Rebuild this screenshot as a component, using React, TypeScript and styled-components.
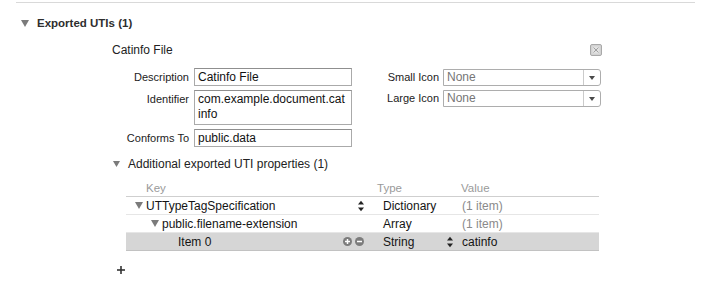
import React from "react";
import styled, { createGlobalStyle } from "styled-components";

const Global = createGlobalStyle`
  html, body { margin: 0; padding: 0; background: #ffffff; }
  body {
    font-family: "Liberation Sans", Arial, Helvetica, sans-serif;
    color: #1c1c1c;
  }
`;

const Page = styled.div`
  width: 708px;
  height: 285px;
  padding-top: 2px;
  box-sizing: border-box;
  overflow: hidden;
`;

const Section = styled.section`
  margin-left: 16px;
  width: 679px;
  border-top: 1px solid #d9d9d9;
`;

const SectionHeader = styled.div`
  display: flex;
  align-items: center;
  gap: 8px;
  height: 16px;
  margin-top: 12px;
  padding-left: 5px;
  font-size: 11.5px;
  font-weight: bold;
  color: #2e2e2e;
`;

const Body = styled.div`
  margin-left: 96px;
  margin-top: 12px;
  display: flex;
  flex-direction: column;
`;

const TitleRow = styled.div`
  display: flex;
  align-items: center;
  justify-content: space-between;
  width: 490px;
  height: 14px;
  font-size: 12px;
  color: #222;
`;

const FormRow = styled.div`
  display: flex;
  align-items: flex-start;
  margin-top: 11px;
`;

const LeftGrid = styled.div`
  display: grid;
  grid-template-columns: 77px 158px;
  column-gap: 5px;
  row-gap: 4px;
`;

const RightGrid = styled.div`
  display: grid;
  grid-template-columns: 54px 158px;
  column-gap: 4px;
  row-gap: 4px;
  margin-left: 33px;
  margin-top: 1px;
`;

const Label = styled.div<{ $h?: number }>`
  font-size: 11px;
  text-align: right;
  line-height: ${(p) => p.$h ?? 18}px;
  color: #222;
  white-space: nowrap;
`;

const TextField = styled.div<{ $tall?: boolean }>`
  box-sizing: border-box;
  height: ${(p) => (p.$tall ? 35 : 18)}px;
  border: 1px solid #aaaaaa;
  border-top-color: #8f8f8f;
  background: #fff;
  padding: ${(p) => (p.$tall ? "1px 3px 0" : "0 3px")};
  font-size: 12px;
  line-height: ${(p) => (p.$tall ? 15 : 16)}px;
  color: #111;
  white-space: nowrap;
  overflow: hidden;
`;

const Popup = styled.div`
  box-sizing: border-box;
  display: flex;
  height: 17px;
  border: 1px solid #adadad;
  border-radius: 0 3px 3px 0;
  background: #fff;
`;

const PopupValue = styled.div`
  flex: 1;
  padding-left: 3px;
  font-size: 12px;
  line-height: 15px;
  color: #767676;
`;

const PopupArrow = styled.div`
  width: 16px;
  border-left: 1px solid #cbcbcb;
  display: flex;
  align-items: center;
  justify-content: center;
`;

const SubHeader = styled.div`
  display: flex;
  align-items: center;
  gap: 8px;
  height: 16px;
  margin-top: 9px;
  padding-left: 1px;
  font-size: 12px;
  color: #222;
`;

const Table = styled.div`
  margin-left: 14px;
  margin-top: 8px;
  width: 473px;
  display: flex;
  flex-direction: column;
`;

const HeadRow = styled.div`
  display: grid;
  grid-template-columns: 249px 80px 1fr;
  box-sizing: border-box;
  height: 17px;
  border-bottom: 1px solid #cfcfcf;
  align-items: center;
  font-size: 11.5px;
  color: #9a9a9a;
`;

const HeadCell = styled.div<{ $pad: number }>`
  padding-left: ${(p) => p.$pad}px;
`;

const Row = styled.div<{ $selected?: boolean }>`
  display: grid;
  grid-template-columns: 249px 80px 1fr;
  box-sizing: border-box;
  height: 18px;
  border-bottom: 1px solid ${(p) => (p.$selected ? "#c2c2c2" : "#e6e6e6")};
  background: ${(p) => (p.$selected ? "#d6d6d6" : "transparent")};
  align-items: center;
  font-size: 12px;
  color: #141414;
`;

const KeyCell = styled.div<{ $indent: number }>`
  display: flex;
  align-items: center;
  height: 100%;
  padding-left: ${(p) => p.$indent}px;
  padding-right: 11px;
  gap: 3px;
  white-space: nowrap;
`;

const Spacer = styled.span`
  display: inline-block;
  width: 8px;
  flex: none;
`;

const RightTools = styled.div`
  margin-left: auto;
  display: flex;
  align-items: center;
  gap: 3px;
`;

const TypeCell = styled.div`
  display: flex;
  align-items: center;
  justify-content: space-between;
  height: 100%;
  padding-left: 8px;
  padding-right: 2px;
`;

const ValueCell = styled.div<{ $muted?: boolean }>`
  padding-left: 7px;
  color: ${(p) => (p.$muted ? "#8a8a8a" : "#141414")};
`;

const AddButton = styled.div`
  margin-top: 15px;
  margin-left: 5px;
  width: 8px;
  height: 8px;
  display: flex;
`;

const Disclosure = ({ w = 8, h = 7 }: { w?: number; h?: number }) => (
  <svg width={w} height={h} viewBox={`0 0 ${w} ${h}`} style={{ flex: "none" }}>
    <polygon points={`0,0 ${w},0 ${w / 2},${h}`} fill="#7b7b7b" />
  </svg>
);

const Stepper = () => (
  <svg width="6" height="12" viewBox="0 0 6 12" style={{ flex: "none" }}>
    <polygon points="0,4.5 3,0.8 6,4.5" fill="#222" />
    <polygon points="0,7.5 3,11.2 6,7.5" fill="#222" />
  </svg>
);

const CircleBtn = ({ plus }: { plus?: boolean }) => (
  <svg width="9" height="9" viewBox="0 0 9 9" style={{ flex: "none" }}>
    <circle cx="4.5" cy="4.5" r="4.5" fill="#7c7c7c" />
    <line x1="2" y1="4.5" x2="7" y2="4.5" stroke="#fff" strokeWidth="1.5" />
    {plus && <line x1="4.5" y1="2" x2="4.5" y2="7" stroke="#fff" strokeWidth="1.5" />}
  </svg>
);

const CloseBox = () => (
  <svg width="12" height="12" viewBox="0 0 12 12">
    <rect x="0.5" y="0.5" width="11" height="11" rx="1.5" fill="#d2d2d2" stroke="#a9a9a9" />
    <rect x="2.5" y="2.5" width="7" height="7" fill="#e2e2e2" />
    <line x1="3.5" y1="3.5" x2="8.5" y2="8.5" stroke="#a0a0a0" strokeWidth="1" />
    <line x1="8.5" y1="3.5" x2="3.5" y2="8.5" stroke="#a0a0a0" strokeWidth="1" />
  </svg>
);

const PopArrowIcon = () => (
  <svg width="6" height="4" viewBox="0 0 6 4">
    <polygon points="0,0 6,0 3,4" fill="#4a4a4a" />
  </svg>
);

const PlusIcon = () => (
  <svg width="8" height="8" viewBox="0 0 8 8">
    <line x1="0" y1="4" x2="8" y2="4" stroke="#333" strokeWidth="1.6" />
    <line x1="4" y1="0" x2="4" y2="8" stroke="#333" strokeWidth="1.6" />
  </svg>
);

type Prop = {
  key: string;
  depth: number;
  hasChildren: boolean;
  keyTool?: "stepper" | "buttons";
  type: string;
  typeStepper?: boolean;
  value: string;
  muted?: boolean;
  selected?: boolean;
};

const props: Prop[] = [
  { key: "UTTypeTagSpecification", depth: 0, hasChildren: true, keyTool: "stepper", type: "Dictionary", value: "(1 item)", muted: true },
  { key: "public.filename-extension", depth: 1, hasChildren: true, type: "Array", value: "(1 item)", muted: true },
  { key: "Item 0", depth: 2, hasChildren: false, keyTool: "buttons", type: "String", typeStepper: true, value: "catinfo", selected: true },
];

export default function App() {
  return (
    <>
      <Global />
      <Page>
        <Section>
          <SectionHeader>
            <Disclosure />
            <span>Exported UTIs (1)</span>
          </SectionHeader>
          <Body>
            <TitleRow>
              <span>Catinfo File</span>
              <CloseBox />
            </TitleRow>
            <FormRow>
              <LeftGrid>
                <Label>Description</Label>
                <TextField>Catinfo File</TextField>
                <Label>Identifier</Label>
                <TextField $tall>
                  <div>com.example.document.cat</div>
                  <div>info</div>
                </TextField>
                <Label>Conforms To</Label>
                <TextField>public.data</TextField>
              </LeftGrid>
              <RightGrid>
                <Label $h={17}>Small Icon</Label>
                <Popup>
                  <PopupValue>None</PopupValue>
                  <PopupArrow>
                    <PopArrowIcon />
                  </PopupArrow>
                </Popup>
                <Label $h={17}>Large Icon</Label>
                <Popup>
                  <PopupValue>None</PopupValue>
                  <PopupArrow>
                    <PopArrowIcon />
                  </PopupArrow>
                </Popup>
              </RightGrid>
            </FormRow>
            <SubHeader>
              <Disclosure w={7} h={6} />
              <span>Additional exported UTI properties (1)</span>
            </SubHeader>
            <Table>
              <HeadRow>
                <HeadCell $pad={20}>Key</HeadCell>
                <HeadCell $pad={2}>Type</HeadCell>
                <HeadCell $pad={6}>Value</HeadCell>
              </HeadRow>
              {props.map((p) => (
                <Row key={p.key} $selected={p.selected}>
                  <KeyCell $indent={9 + 16 * p.depth}>
                    {p.hasChildren ? <Disclosure /> : <Spacer />}
                    <span>{p.key}</span>
                    {p.keyTool && (
                      <RightTools>
                        {p.keyTool === "stepper" ? (
                          <Stepper />
                        ) : (
                          <>
                            <CircleBtn plus />
                            <CircleBtn />
                          </>
                        )}
                      </RightTools>
                    )}
                  </KeyCell>
                  <TypeCell>
                    <span>{p.type}</span>
                    {p.typeStepper && <Stepper />}
                  </TypeCell>
                  <ValueCell $muted={p.muted}>{p.value}</ValueCell>
                </Row>
              ))}
            </Table>
            <AddButton>
              <PlusIcon />
            </AddButton>
          </Body>
        </Section>
      </Page>
    </>
  );
}
